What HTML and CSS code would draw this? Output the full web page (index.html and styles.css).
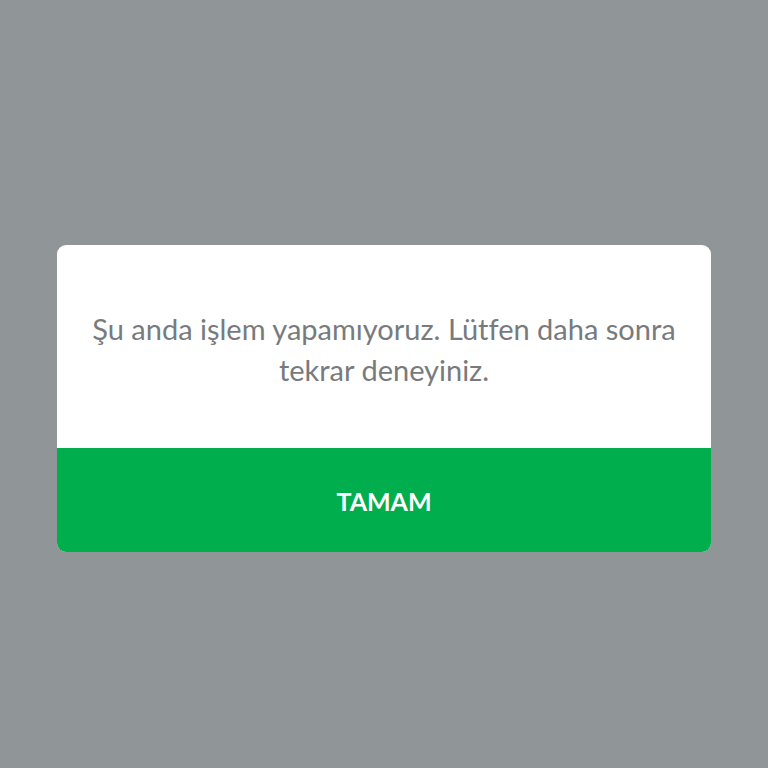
FILE: index.html
```html
<!DOCTYPE html>
<html lang="tr">
<head>
    <meta charset="UTF-8">
    <meta name="viewport" content="width=device-width, initial-scale=1.0">
    <title>Uyarı</title>
    <link rel="stylesheet" href="styles.css">
</head>
<body>

<div class="overlay">
    <div class="dialog" role="alertdialog" aria-modal="true" aria-describedby="message">
        <p class="message" id="message">Şu anda işlem yapamıyoruz. Lütfen daha sonra tekrar deneyiniz.</p>
        <button class="confirm" type="button">TAMAM</button>
    </div>
</div>

</body>
</html>
```

FILE: styles.css
```css
* {
    box-sizing: border-box;
}

body {
    margin: 0;
    font-family: Lato, "Open Sans", sans-serif;
    background-color: #909598;
}

.overlay {
    display: flex;
    align-items: center;
    justify-content: center;
    min-height: 100vh;
    padding: 29px 57px 0;
}

.dialog {
    width: 100%;
    background-color: #fff;
    border-radius: 9px;
    overflow: hidden;
}

.message {
    margin: 0;
    padding: 63px 32px 58px;
    color: #777b7e;
    font-size: 29px;
    font-variant-ligatures: none;
    line-height: 41px;
    text-align: center;
}

.confirm {
    display: block;
    width: 100%;
    height: 104px;
    padding: 2px 0 0;
    border: none;
    background-color: #00ae4d;
    color: #fff;
    font-family: inherit;
    font-size: 25px;
    font-weight: bold;
    cursor: pointer;
}

.confirm:hover {
    background-color: #009c45;
}
```
